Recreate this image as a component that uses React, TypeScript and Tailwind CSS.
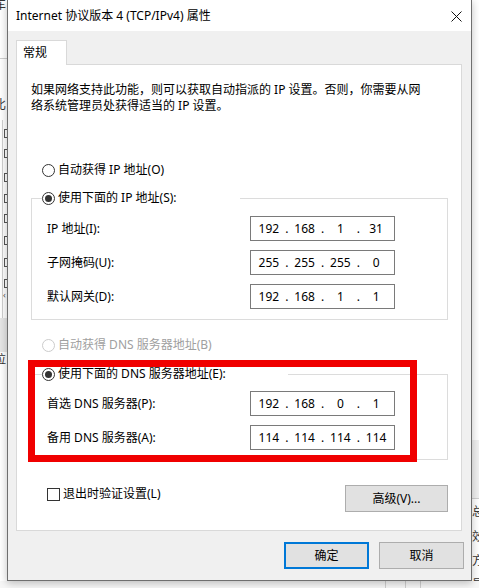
import React from "react";

function Radio({ checked, disabled }: { checked?: boolean; disabled?: boolean }) {
  return (
    <span
      className={
        disabled
          ? "flex h-[13px] w-[13px] shrink-0 items-center justify-center rounded-full border border-[#cccccc] bg-white"
          : "flex h-[13px] w-[13px] shrink-0 items-center justify-center rounded-full border border-[#333333] bg-white"
      }
    >
      {checked && <span className="h-[7px] w-[7px] rounded-full bg-[#333333]" />}
    </span>
  );
}

function IpField({ parts }: { parts: string[] }) {
  return (
    <div className="flex h-[25px] w-[145px] items-center border border-[#7a7a7a] bg-white px-[2px] text-[12px] leading-[16px] text-black">
      {parts.map((p, i) => (
        <React.Fragment key={i}>
          {i > 0 && <span className="w-[4px] text-center">.</span>}
          <span className="flex-1 text-center">{p}</span>
        </React.Fragment>
      ))}
    </div>
  );
}

function Row({ label, parts }: { label: string; parts: string[] }) {
  return (
    <>
      <div className="text-[12px] leading-[16px] text-black">{label}</div>
      <IpField parts={parts} />
    </>
  );
}

function Background() {
  const boxes = [133, 153, 177, 198, 218, 240, 262, 283];
  return (
    <div className="relative h-[588px] w-[479px] overflow-hidden bg-white">
      {/* left strip fragments */}
      <div className="absolute left-[-6px] top-[-3px] text-[12px] leading-[16px] text-[#333]">车</div>
      <div className="absolute left-0 top-[58px] h-px w-[8px] bg-[#cfcfcf]" />
      <div className="absolute left-[-6px] top-[97px] text-[12px] leading-[16px] text-[#333]">比</div>
      <div className="absolute left-[2px] top-[120px] h-[200px] w-px bg-[#d0d0d0]" />
      {boxes.map((y) => (
        <div key={y} className="absolute left-[4px] h-[9px] w-[6px] border border-[#555] bg-white" style={{ top: y - 4 }} />
      ))}
      <div className="absolute left-[3px] top-[290px] text-[9px] leading-[10px] text-[#555]">‹</div>
      <div className="absolute left-0 top-[318px] h-[34px] w-[8px] bg-[#e6e6e6]" />
      <div className="absolute left-[-6px] top-[352px] text-[12px] leading-[16px] text-[#333]">拉</div>
      {/* right strip fragments */}
      <div className="absolute left-[471px] top-[440px] h-[58px] w-[8px] bg-[#f0f0f0]" />
      <div className="absolute left-[471px] top-[498px] h-px w-[8px] bg-[#cfcfcf]" />
      <div className="absolute left-[472px] top-[504px] text-[12px] leading-[16px] text-[#333]">总</div>
      <div className="absolute left-[472px] top-[529px] text-[12px] leading-[16px] text-[#333]">效</div>
      <div className="absolute left-[472px] top-[553px] text-[12px] leading-[16px] text-[#333]">方</div>
      <div className="absolute left-[472px] top-[577px] text-[12px] leading-[16px] text-[#333]">是</div>
      {/* bottom strip */}
      <div className="absolute left-0 top-[581px] h-[7px] w-[479px] bg-[#f7f7f7]" />
      <div className="absolute left-[385px] top-[581px] h-[7px] w-px bg-[#cfcfcf]" />
      <div className="absolute left-[405px] top-[581px] h-[7px] w-px bg-[#cfcfcf]" />
      <div className="absolute left-[420px] top-[581px] h-[7px] w-px bg-[#cfcfcf]" />
    </div>
  );
}

export default function App() {
  return (
    <div className="relative h-[588px] w-[479px] overflow-hidden font-['Noto_Sans','Noto_Sans_CJK_SC',sans-serif]">
      <Background />
      {/* dialog window */}
      <div className="absolute left-[7px] top-0 flex h-[581px] w-[465px] flex-col border-x border-b border-[#6f6f6f] bg-[#f0f0f0] shadow-[0_2px_8px_rgba(0,0,0,0.25)]">
        {/* title bar */}
        <div className="flex h-[31px] shrink-0 items-center justify-between bg-white pl-[8px] pr-[9px]">
          <span className="text-[12px] leading-[16px] text-black">Internet 协议版本 4 (TCP/IPv4) 属性</span>
          <svg width="11" height="11" viewBox="0 0 11 11" className="mt-[1px]">
            <path d="M0.5 0.5 L10.5 10.5 M10.5 0.5 L0.5 10.5" stroke="#111" strokeWidth="1" fill="none" />
          </svg>
        </div>

        {/* body */}
        <div className="flex flex-1 flex-col pl-[8px] pr-[9px] pt-[9px]">
          {/* tab */}
          <div className="relative z-10 -mb-px flex h-[25px] w-[51px] items-center border-x border-t border-[#d9d9d9] bg-white pl-[6px] text-[12px] leading-[16px] text-black">
            常规
          </div>
          {/* panel */}
          <div className="relative flex h-[467px] flex-col border border-[#d9d9d9] bg-white">
            <div className="ml-[14px] mt-[17px] text-[12px] leading-[16px] text-black">
              <div>如果网络支持此功能，则可以获取自动指派的 IP 设置。否则，你需要从网</div>
              <div>络系统管理员处获得适当的 IP 设置。</div>
            </div>

            <div className="ml-[25px] mt-[48px] flex h-[16px] items-center gap-[3px] text-[12px] leading-[16px] text-black">
              <Radio />
              <span>自动获得 IP 地址(O)</span>
            </div>

            <fieldset className="ml-[14px] mt-[12px] w-[417px] border border-[#dcdcdc] px-0 pb-[10px]">
              <legend className="ml-[10px] flex h-[16px] w-[198px] items-center gap-[3px] p-0 text-[12px] leading-[16px] text-black">
                <Radio checked />
                <span>使用下面的 IP 地址(S):</span>
              </legend>
              <div className="grid grid-cols-[203px_145px] items-center gap-y-[9px] pl-[15px] pt-[10px]">
                <Row label="IP 地址(I):" parts={["192", "168", "1", "31"]} />
                <Row label="子网掩码(U):" parts={["255", "255", "255", "0"]} />
                <Row label="默认网关(D):" parts={["192", "168", "1", "1"]} />
              </div>
            </fieldset>

            <div className="ml-[25px] mt-[17px] flex h-[16px] items-center gap-[3px] text-[12px] leading-[16px] text-[#a0a0a0]">
              <Radio disabled />
              <span>自动获得 DNS 服务器地址(B)</span>
            </div>

            <fieldset className="ml-[14px] mt-[13px] w-[417px] border border-[#dcdcdc] px-0 pb-[9px]">
              <legend className="ml-[10px] flex h-[16px] w-[246px] items-center gap-[3px] p-0 text-[12px] leading-[16px] text-black">
                <Radio checked />
                <span>使用下面的 DNS 服务器地址(E):</span>
              </legend>
              <div className="grid grid-cols-[203px_145px] items-center gap-y-[9px] pl-[15px] pt-[9px]">
                <Row label="首选 DNS 服务器(P):" parts={["192", "168", "0", "1"]} />
                <Row label="备用 DNS 服务器(A):" parts={["114", "114", "114", "114"]} />
              </div>
            </fieldset>

            <div className="ml-[30px] mr-[13px] mt-[25px] flex items-start justify-between">
              <div className="mt-[1px] flex h-[16px] items-center gap-[3px] text-[12px] leading-[16px] text-black">
                <span className="h-[13px] w-[13px] border border-[#333333] bg-white" />
                <span>退出时验证设置(L)</span>
              </div>
              <div className="flex h-[27px] w-[103px] items-center justify-center border border-[#adadad] bg-[#e1e1e1] text-[12px] leading-[16px] text-black">
                高级(V)...
              </div>
            </div>

            {/* red highlight annotation */}
            <div className="pointer-events-none absolute left-[11px] top-[295px] h-[102px] w-[389px] border-x-[7px] border-y-[7px] border-[#f00000]" />
          </div>

          {/* bottom buttons */}
          <div className="mr-[-2px] mt-[11px] flex justify-end gap-[10px]">
            <div className="flex h-[27px] w-[85px] items-center justify-center border-2 border-[#0078d7] bg-[#e1e1e1] text-[12px] leading-[16px] text-black">
              确定
            </div>
            <div className="flex h-[27px] w-[85px] items-center justify-center border border-[#adadad] bg-[#e1e1e1] text-[12px] leading-[16px] text-black">
              取消
            </div>
          </div>
        </div>
      </div>
    </div>
  );
}
